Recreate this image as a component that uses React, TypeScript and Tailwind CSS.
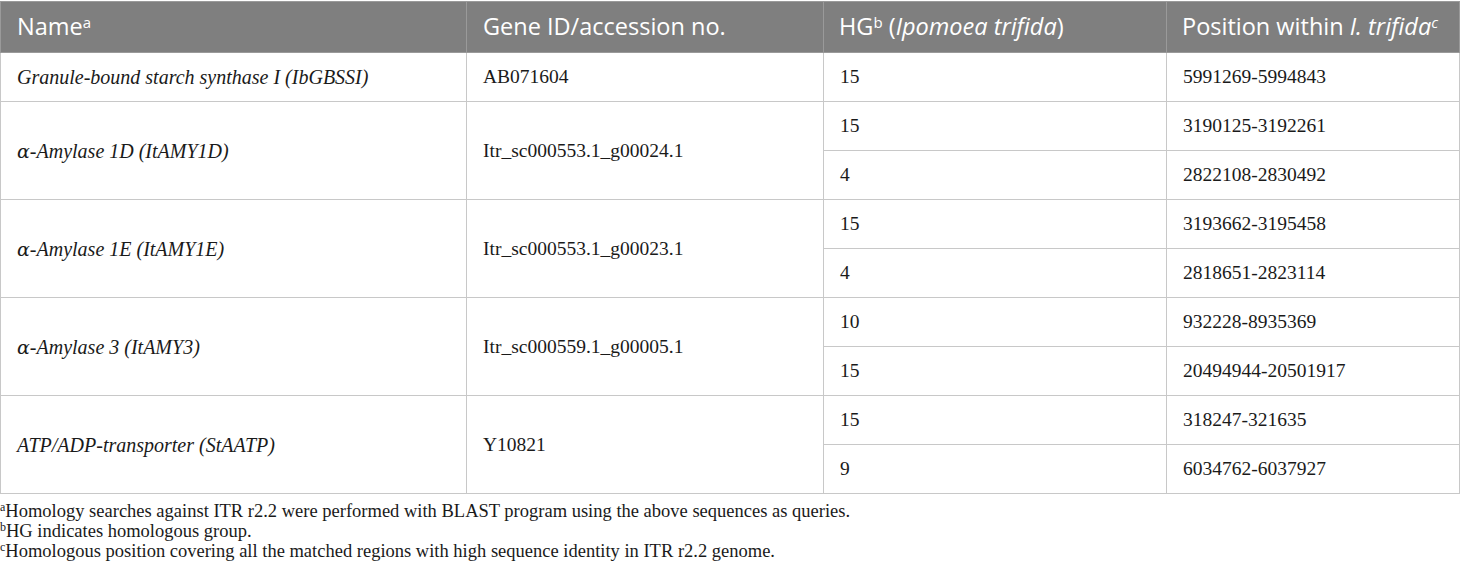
const serif = "font-['Liberation_Serif',serif]";

type Sub = { hg: string; pos: string };
type Row = { name: string; alpha?: boolean; id: string; subs: Sub[] };

const rows: Row[] = [
  { name: 'Granule-bound starch synthase I (IbGBSSI)', id: 'AB071604', subs: [{ hg: '15', pos: '5991269-5994843' }] },
  {
    name: '-Amylase 1D (ItAMY1D)',
    alpha: true,
    id: 'Itr_sc000553.1_g00024.1',
    subs: [
      { hg: '15', pos: '3190125-3192261' },
      { hg: '4', pos: '2822108-2830492' },
    ],
  },
  {
    name: '-Amylase 1E (ItAMY1E)',
    alpha: true,
    id: 'Itr_sc000553.1_g00023.1',
    subs: [
      { hg: '15', pos: '3193662-3195458' },
      { hg: '4', pos: '2818651-2823114' },
    ],
  },
  {
    name: '-Amylase 3 (ItAMY3)',
    alpha: true,
    id: 'Itr_sc000559.1_g00005.1',
    subs: [
      { hg: '10', pos: '932228-8935369' },
      { hg: '15', pos: '20494944-20501917' },
    ],
  },
  {
    name: 'ATP/ADP-transporter (StAATP)',
    id: 'Y10821',
    subs: [
      { hg: '15', pos: '318247-321635' },
      { hg: '9', pos: '6034762-6037927' },
    ],
  },
];

const td = 'border border-[#c8c8c8] pl-[16px] align-middle text-[19.5px] text-[#1a1a1a]';

export default function App() {
  return (
    <div className="w-[1460px] h-[573px] bg-white pt-px">
      <table className="w-[1459px] border-collapse table-fixed">
        <colgroup>
          <col className="w-[466px]" />
          <col className="w-[357px]" />
          <col className="w-[343px]" />
          <col className="w-[293px]" />
        </colgroup>
        <thead>
          <tr className="h-[51px] bg-[#7f7f7f] text-white text-[23.5px] font-['Open_Sans',sans-serif] text-left">
            <th className="font-normal pl-[16px] border border-[#9a9a9a]">
              Name<sup className="text-[15px]">a</sup>
            </th>
            <th className="font-normal pl-[16px] border border-[#9a9a9a]">Gene ID/accession no.</th>
            <th className="font-normal pl-[15px] border border-[#9a9a9a]">
              HG<sup className="text-[15px]">b</sup> (<i>Ipomoea trifida</i>)
            </th>
            <th className="font-normal pl-[15px] border border-[#9a9a9a]">
              Position within <i>I. trifida</i>
              <sup className="text-[15px] italic">c</sup>
            </th>
          </tr>
        </thead>
        <tbody className={serif}>
          {rows.map((r) =>
            r.subs.map((s, i) => (
              <tr key={r.id + i} className="h-[49px]">
                {i === 0 && (
                  <>
                    <td rowSpan={r.subs.length} className={td + ' italic text-[20px]'}>
                      {r.alpha && <span className="font-['DejaVu_Serif',serif] text-[19px]">α</span>}
                      {r.name}
                    </td>
                    <td rowSpan={r.subs.length} className={td}>
                      {r.id}
                    </td>
                  </>
                )}
                <td className={td + ' pl-[15px]'}>{s.hg}</td>
                <td className={td + ' pl-[15px]'}>{s.pos}</td>
              </tr>
            ))
          )}
        </tbody>
      </table>
      <div className={serif + ' mt-[7px] text-[18.5px] leading-[20px] text-[#1a1a1a]'}>
        <p>
          <sup className="text-[12px]">a</sup>Homology searches against ITR r2.2 were performed with BLAST program using the
          above sequences as queries.
        </p>
        <p>
          <sup className="text-[12px]">b</sup>HG indicates homologous group.
        </p>
        <p>
          <sup className="text-[12px]">c</sup>Homologous position covering all the matched regions with high sequence
          identity in ITR r2.2 genome.
        </p>
      </div>
    </div>
  );
}
